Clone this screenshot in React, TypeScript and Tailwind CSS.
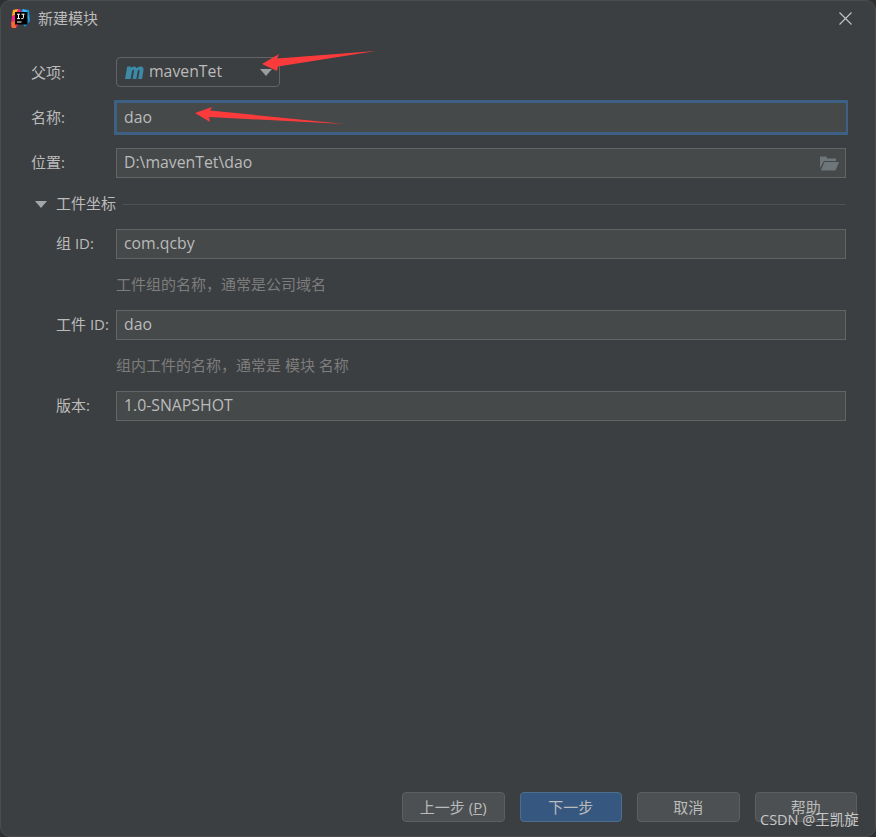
import React from 'react'

const FONT = "font-['Open_Sans','Noto_Sans_CJK_SC',sans-serif]"

const IdeaLogo = () => (
  <svg width="21" height="21" viewBox="0 0 21 21" className="mb-[2px] shrink-0">
    <path d="M12 1 L19 2 L20 13 L15 19 L9 10 Z" fill="#1c8fe0" />
    <path d="M13 1 L17 3 L19 11 L13 8 Z" fill="#34c3e8" />
    <path d="M3 2 L10 1 L13 8 L6 20 L1 19 L2 8 Z" fill="#f0257f" />
    <path d="M3 2 L8 1 L6 6 L2 8 Z" fill="#f8b21c" />
    <path d="M1 14 L5 13 L6 20 L2 20 Z" fill="#f46a2c" />
    <rect x="5" y="4" width="12.5" height="12.5" fill="#000" />
    <rect x="7" y="13.5" width="4.5" height="1" fill="#fff" />
    <path d="M7 6.2h3M8.5 6.2v4.4M7 10.6h3M11.5 6.2h3M13.4 6.2v3.6q0 .8-.9.8h-1.3" stroke="#fff" strokeWidth="1" fill="none" />
  </svg>
)

const FolderIcon = () => (
  <svg width="19" height="15" viewBox="0 0 19 15">
    <path d="M0 0.5 H6 L7.5 2.5 H16 V5 H4 L0 12 Z" fill="#6e7679" />
    <path d="M4.5 6 H19 L15.5 14.5 H0.8 Z" fill="#6e7679" />
  </svg>
)

const Field = ({ value }: { value: string }) => (
  <div className="flex h-[30px] flex-1 items-center border border-[#646464] bg-[#45494a] pl-[7px] text-[15.8px] text-[#bbbbbb]">
    {value}
  </div>
)

const Row = ({ label, value }: { label: string; value: string }) => (
  <div className="flex items-center">
    <div className="mb-[2px] w-[86px] shrink-0 whitespace-nowrap pl-[26px] text-[#bbbbbb]">{label}</div>
    <Field value={value} />
  </div>
)

const Hint = ({ children }: { children: string }) => (
  <div className="h-[51px] pl-[86px] pt-[15px] leading-[20px] text-[#7d7d7d]">{children}</div>
)

const FooterButton = ({ children, primary }: { children: React.ReactNode; primary?: boolean }) => (
  <div
    className={`flex h-[30px] w-[102.5px] items-center justify-center rounded-[4px] border text-[#bbbbbb] ${
      primary ? 'border-[#4c708c] bg-[#365880]' : 'border-[#5e6060] bg-[#4c5052]'
    }`}
  >
    {children}
  </div>
)

export default function App() {
  return (
    <div className={`relative h-[837px] w-[876px] overflow-hidden bg-[#2f3032] text-[15px] ${FONT}`}>
      <div className="flex h-full w-full flex-col rounded-[10px] border border-[#4a4c4e] bg-[#3c3f41]">
        {/* title bar */}
        <div className="flex h-[37px] shrink-0 items-center pl-[9px] pr-[23px]">
          <IdeaLogo />
          <span className="mb-[2px] ml-[7px] text-[#bbbbbb]">新建模块</span>
          <svg width="13" height="13" viewBox="0 0 13 13" className="mb-[3px] ml-auto">
            <path d="M0.5 0.5 L12.5 12.5 M12.5 0.5 L0.5 12.5" stroke="#c4c6c7" strokeWidth="1.1" />
          </svg>
        </div>

        <div className="flex flex-col pl-[29px] pr-[29px] pt-[19px]">
          <div className="flex h-[30px] items-center">
            <div className="w-[86px] pl-px text-[#bbbbbb]">父项:</div>
            <div className="flex h-[30px] w-[164px] items-center rounded-[4px] border border-[#646464] bg-[#3c3f41] pl-[8px] pr-[7px] text-[15.8px] text-[#bbbbbb]">
              <svg width="19" height="13" viewBox="0 0 19 13" className="shrink-0">
                <path d="M0 13 L2.2 0.6 H6 L5.8 2 Q7.2 0.2 9.3 0.4 Q11.2 0.6 11.7 2.2 Q13.3 0.2 15.5 0.4 Q19 0.7 18.5 4.2 L17 13 H13.2 L14.6 5 Q14.8 3.8 13.9 3.8 Q13 3.8 12.7 5.3 L11.3 13 H7.6 L9 5 Q9.2 3.8 8.3 3.8 Q7.3 3.8 7 5.3 L5.6 13 Z" fill="#3a8aa8" />
              </svg>
              <span className="ml-[5px]">mavenTet</span>
              <svg width="12" height="7" viewBox="0 0 12 7" className="ml-auto">
                <path d="M0 0 H12 L6 7 Z" fill="#9a9d9f" />
              </svg>
            </div>
          </div>

          <div className="mt-[13px] flex h-[35px] items-center">
            <div className="w-[84px] pl-px text-[#bbbbbb]">名称:</div>
            <div className="-mr-[2px] flex h-[35px] flex-1 items-center border-y-[3.5px] border-l-[3px] border-r-[2px] border-[#3d6185] bg-[#45494a] pl-[7px] text-[15.8px] text-[#bbbbbb]">
              dao
            </div>
          </div>

          <div className="mt-[13px] flex items-center">
            <div className="mb-[1px] w-[86px] pl-px text-[#bbbbbb]">位置:</div>
            <div className="flex h-[30px] flex-1 items-center justify-between border border-[#646464] bg-[#45494a] pl-[7px] pr-[6px] text-[15.8px] text-[#bbbbbb]">
              <span>D:\mavenTet\dao</span>
              <FolderIcon />
            </div>
          </div>

          <div className="mt-[15px] flex h-[22px] items-center">
            <svg width="12" height="7" viewBox="0 0 12 7" className="ml-[5px]">
              <path d="M0 0 H12 L6 7 Z" fill="#a4a7a9" />
            </svg>
            <span className="mb-[2px] ml-[9px] text-[#bbbbbb]">工件坐标</span>
            <div className="ml-[7px] h-px flex-1 bg-[#515151]" />
          </div>

          <div className="mt-[14px] flex flex-col">
            <Row label="组 ID:" value="com.qcby" />
            <Hint>工件组的名称，通常是公司域名</Hint>
            <Row label="工件 ID:" value="dao" />
            <Hint>组内工件的名称，通常是 模块 名称</Hint>
            <Row label="版本:" value="1.0-SNAPSHOT" />
          </div>
        </div>

        <div className="mt-auto flex justify-end gap-[15px] pb-[14px] pr-[18px]">
          <FooterButton>
            <span>
              上一步 (<span className="underline">P</span>)
            </span>
          </FooterButton>
          <FooterButton primary>下一步</FooterButton>
          <FooterButton>取消</FooterButton>
          <FooterButton>帮助</FooterButton>
        </div>
      </div>

      {/* red annotation arrows pasted on the screenshot */}
      <svg width="876" height="837" viewBox="0 0 876 837" className="pointer-events-none absolute left-0 top-0">
        <path d="M262 64 L279 54 L277 58.5 L376 51 L278 66.5 L277 71 Z" fill="#fb3b3b" />
        <path d="M195 113 L212 107 L210 110.5 L345 124 L209 117 L210 122 Z" fill="#fb3b3b" />
      </svg>

      <span className="absolute left-[760px] top-[810px] text-[14.5px] leading-[20px] text-[#c8c8c8]">CSDN @王凯旋</span>
    </div>
  )
}
